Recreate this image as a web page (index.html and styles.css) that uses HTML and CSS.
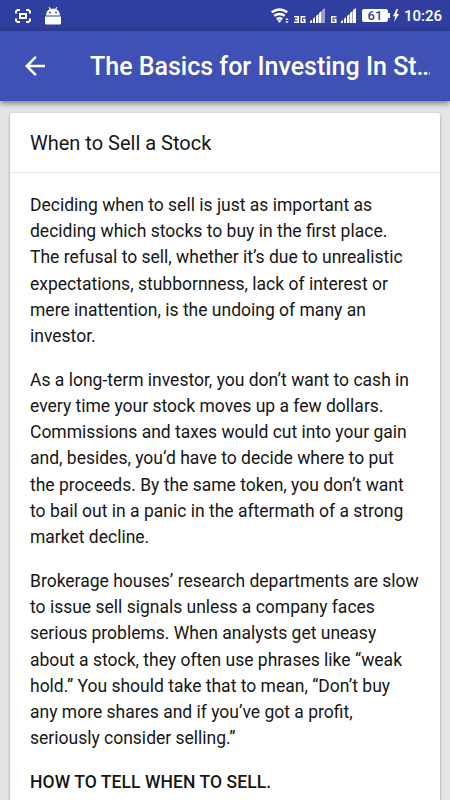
FILE: index.html
```html
<!DOCTYPE html>
<html lang="en">
<head>
  <meta charset="UTF-8" />
  <meta name="viewport" content="width=device-width, initial-scale=1.0" />
  <title>The Basics for Investing In Stocks</title>
  <link rel="stylesheet" href="styles.css">
</head>
<body>

  <!-- Status bar -->
  <div class="status-bar">
    <div class="status-left">
      <svg class="icon-shot" width="16" height="14" viewBox="0 0 16 14" fill="none" stroke="#fff" stroke-width="2">
        <path d="M1 4.500V2.500L2.500 1H5M11 1h2.500L15 2.500v2M15 9.500v2L13.500 13H11M5 13H2.500L1 11.500v-2" />
        <rect x="5" y="5" width="6" height="4" />
      </svg>
      <svg class="icon-android" width="16" height="18" viewBox="0 0 16 18" fill="#fff">
        <path d="M1 8.500C1 5 3 3 4.800 2.300L3.500.600 4.500 0 6 1.900a7 7 0 0 1 4 0L11.500 0l1 .6L11.200 2.300C13 3 15 5 15 8.500z" />
        <path d="M0 9.500h16v7q0 1-1 1H1q-1 0-1-1z" />
        <circle cx="5" cy="5.500" r=".9" fill="#303f9f" />
        <circle cx="11" cy="5.500" r=".9" fill="#303f9f" />
      </svg>
    </div>
    <div class="status-right">
      <svg class="icon-wifi" width="19" height="16" viewBox="0 0 19 16">
        <g fill="none" stroke="#fff" stroke-width="2.400">
          <path d="M.7 4.200q7.800-5.600 15.600 0" />
          <path d="M3.200 7.800q5.300-3.800 10.600 0" />
          <path d="M5.700 11.200q2.800-2 5.600 0" />
        </g>
        <path d="M6.500 12.600q2-1.200 4 0l-2 2.400z" fill="#fff" />
        <path d="M14.300 12l1.700-2 1.700 2zM14.300 13.300h3.400l-1.700 2z" fill="#fff" />
      </svg>
      <svg class="icon-3g" width="12" height="7" viewBox="0 0 12 7" fill="none" stroke="#fff" stroke-width="1.500">
        <path d="M0 .75h4.250v5.500H0M1 3.500h3.250M11.500.75H7.250v5.500h3.500V3.500H9" />
      </svg>
      <svg class="icon-signal" width="15" height="15" viewBox="0 0 15 15" fill="#fff">
        <path d="M0 15v-2l2-1v3zM3 15v-4l2-2v6zM6 15V8l2.500-2v9zM9 15V5l2.500-2v12z" />
        <path d="M12 15V2l3-2v15z" opacity=".5" />
      </svg>
      <svg class="icon-g" width="6" height="7" viewBox="0 0 6 7" fill="none" stroke="#fff" stroke-width="1.500">
        <path d="M5.400.75H.75v5.500h4V3.500H2.500" />
      </svg>
      <svg class="icon-signal" width="15" height="15" viewBox="0 0 15 15" fill="#fff">
        <path d="M0 15v-2l2-1v3zM3 15v-4l2-2v6zM6 15V8l2.500-2v9zM9 15V5l2.500-2v12zM12 15V2l3-2v15z" />
      </svg>
      <span class="battery">61</span>
      <svg class="icon-bolt" width="6" height="13" viewBox="0 0 6 13" fill="#fff">
        <path d="M3.500 0L0 7.300h2.200L1.200 13 6 5H3.700L5 0z" />
      </svg>
      <span class="clock">10:26</span>
    </div>
  </div>

  <!-- Toolbar -->
  <div class="toolbar">
    <svg class="back-arrow" width="20" height="20" viewBox="0 0 20 20" fill="#fff">
      <path d="M20 8.750H4.790l6.980-6.990L10 0 0 10l10 10 1.760-1.760-6.970-6.990H20z" />
    </svg>
    <h1>The Basics for Investing In St…</h1>
  </div>

  <!-- Content -->
  <div class="content">
    <div class="card">
      <h2>When to Sell a Stock</h2>
      <div class="card-content">
        <p>Deciding when to sell is just as important as deciding which stocks to buy in the first place. The refusal to sell, whether it’s due to unrealistic expectations, stubbornness, lack of interest or mere inattention, is the undoing of many an investor.</p>
        <p>As a long-term investor, you don’t want to cash in every time your stock moves up a few dollars. Commissions and taxes would cut into your gain and, besides, you‘d have to decide where to put the proceeds. By the same token, you don’t want to bail out in a panic in the aftermath of a strong market decline.</p>
        <p>Brokerage houses’ research departments are slow to issue sell signals unless a company faces serious problems. When analysts get uneasy about a stock, they often use phrases like “weak hold.” You should take that to mean, “Don’t buy any more shares and if you’ve got a profit, seriously consider selling.”</p>
        <p><strong>HOW TO TELL WHEN TO SELL.</strong></p>
      </div>
    </div>
  </div>

</body>
</html>
```

FILE: styles.css
```css
body {
  margin: 0;
  height: 800px;
  display: flex;
  flex-direction: column;
  overflow: hidden;
  font-family: Roboto, sans-serif;
  background: #e5e5e5;
  color: #161616;
}
.status-bar {
  box-sizing: border-box;
  flex: none;
  height: 31px;
  padding: 0 8px 0 15px;
  display: flex;
  justify-content: space-between;
  background: #303f9f;
  color: #fff;
}
.status-left, .status-right {
  display: flex;
  align-items: flex-start;
}
.icon-shot { margin-top: 9px; }
.icon-android { margin: 7px 0 0 14px; }
.icon-wifi { margin-top: 8px; }
.icon-3g { margin: 16px 0 0 4px; }
.icon-signal { margin: 8px 0 0 4px; }
.icon-g { margin: 16px 0 0 6px; }
.battery {
  position: relative;
  width: 26px;
  height: 13px;
  margin: 9px 0 0 6px;
  border-radius: 2px;
  background: #fff;
  color: #303f9f;
  font-size: 13px;
  font-weight: 500;
  line-height: 14px;
  text-align: center;
}
.battery::after {
  content: "";
  position: absolute;
  top: 4px;
  right: -2px;
  width: 2px;
  height: 5px;
  background: #fff;
}
.icon-bolt { margin: 9px 0 0 5px; }
.clock {
  margin-left: 5px;
  font-size: 15px;
  font-weight: 500;
  line-height: 33px;
}
.toolbar {
  position: relative;
  flex: none;
  height: 70px;
  display: flex;
  align-items: center;
  background: #3f51b5;
  color: #fff;
  box-shadow: 0 2px 6px rgba(0, 0, 0, 0.5);
}
.back-arrow {
  flex: none;
  margin: 0 45px 0 25px;
}
.toolbar h1 {
  margin: 0 20px 0 0;
  padding-top: 2px;
  min-width: 0;
  font-size: 25px;
  font-weight: 500;
  line-height: 68px;
  white-space: nowrap;
  overflow: hidden;
}
.content {
  flex: 1;
  min-height: 0;
  padding: 12px 10px 0;
  overflow: hidden;
}
.card {
  background: #fff;
  border-radius: 2.5px;
  box-shadow: 0 1px 3px rgba(0, 0, 0, 0.35);
}
.card h2 {
  margin: 0;
  padding: 15px 20px 14px;
  border-bottom: 1px solid #e8e8e8;
  font-size: 20px;
  font-weight: 400;
  line-height: 30px;
}
.card-content {
  padding: 19px 20px;
}
.card-content p {
  margin: 0 0 17.5px;
  font-size: 17.5px;
  line-height: 26.22px;
}
.card-content strong {
  font-weight: 500;
  letter-spacing: 0.08px;
}
```
